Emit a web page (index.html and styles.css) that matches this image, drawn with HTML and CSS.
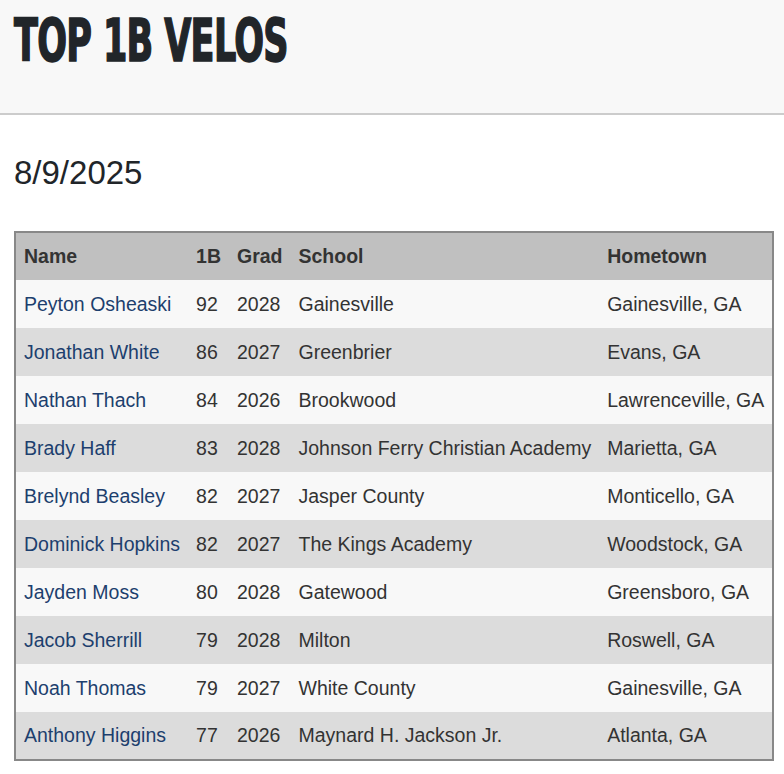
FILE: index.html
```html
<!DOCTYPE html>
<html>
<head>
<meta charset="utf-8">
<link rel="stylesheet" href="styles.css">
</head>
<body>
<header class="banner">
  <h1 class="title"><span class="title-text">TOP 1B VELOS</span></h1>
</header>
<main class="content">
  <p class="date">8/9/2025</p>
  <table class="velos">
    <thead>
      <tr><th>Name</th><th>1B</th><th>Grad</th><th>School</th><th>Hometown</th></tr>
    </thead>
    <tbody>
      <tr><td><a href="#">Peyton Osheaski</a></td><td>92</td><td>2028</td><td>Gainesville</td><td>Gainesville, GA</td></tr>
      <tr><td><a href="#">Jonathan White</a></td><td>86</td><td>2027</td><td>Greenbrier</td><td>Evans, GA</td></tr>
      <tr><td><a href="#">Nathan Thach</a></td><td>84</td><td>2026</td><td>Brookwood</td><td>Lawrenceville, GA</td></tr>
      <tr><td><a href="#">Brady Haff</a></td><td>83</td><td>2028</td><td>Johnson Ferry Christian Academy</td><td>Marietta, GA</td></tr>
      <tr><td><a href="#">Brelynd Beasley</a></td><td>82</td><td>2027</td><td>Jasper County</td><td>Monticello, GA</td></tr>
      <tr><td><a href="#">Dominick Hopkins</a></td><td>82</td><td>2027</td><td>The Kings Academy</td><td>Woodstock, GA</td></tr>
      <tr><td><a href="#">Jayden Moss</a></td><td>80</td><td>2028</td><td>Gatewood</td><td>Greensboro, GA</td></tr>
      <tr><td><a href="#">Jacob Sherrill</a></td><td>79</td><td>2028</td><td>Milton</td><td>Roswell, GA</td></tr>
      <tr><td><a href="#">Noah Thomas</a></td><td>79</td><td>2027</td><td>White County</td><td>Gainesville, GA</td></tr>
      <tr><td><a href="#">Anthony Higgins</a></td><td>77</td><td>2026</td><td>Maynard H. Jackson Jr.</td><td>Atlanta, GA</td></tr>
    </tbody>
  </table>
</main>
</body>
</html>
```
FILE: styles.css
```css
html, body {
  margin: 0;
  padding: 0;
  background: #ffffff;
  color: #212529;
  font-family: "Liberation Sans", Arial, sans-serif;
}

.banner {
  box-sizing: border-box;
  height: 115px;
  background: #f8f8f8;
  border-bottom: 2px solid #cccccc;
  padding: 0 14px;
}

.title {
  margin: 0;
  padding-top: 8px;
  font-family: "DejaVu Sans Condensed", "DejaVu Sans", sans-serif;
  font-weight: bold;
  font-size: 59px;
  line-height: 66px;
  color: #212529;
  white-space: nowrap;
}

.title-text {
  display: inline-block;
  transform: scaleX(0.66);
  transform-origin: left center;
  letter-spacing: -1px;
  -webkit-text-stroke: 1.6px #212529;
}

.content {
  padding: 0 14px;
}

.date {
  margin: 38px 0 0 0;
  font-size: 33px;
  line-height: 40px;
  color: #212529;
}

.velos {
  margin-top: 38px;
  border-collapse: collapse;
  border: 2px solid #888888;
  font-size: 19.5px;
  color: #333333;
}

.velos th,
.velos td {
  height: 48px;
  padding: 0 8px;
  text-align: left;
  white-space: nowrap;
  box-sizing: border-box;
}

.velos th {
  background: #c0c0c0;
  font-weight: bold;
  color: #333333;
}

.velos tbody tr:nth-child(odd) td {
  background: #f8f8f8;
}

.velos tbody tr:nth-child(even) td {
  background: #dcdcdc;
}

.velos a {
  color: #1d3f6e;
  text-decoration: none;
}
```
